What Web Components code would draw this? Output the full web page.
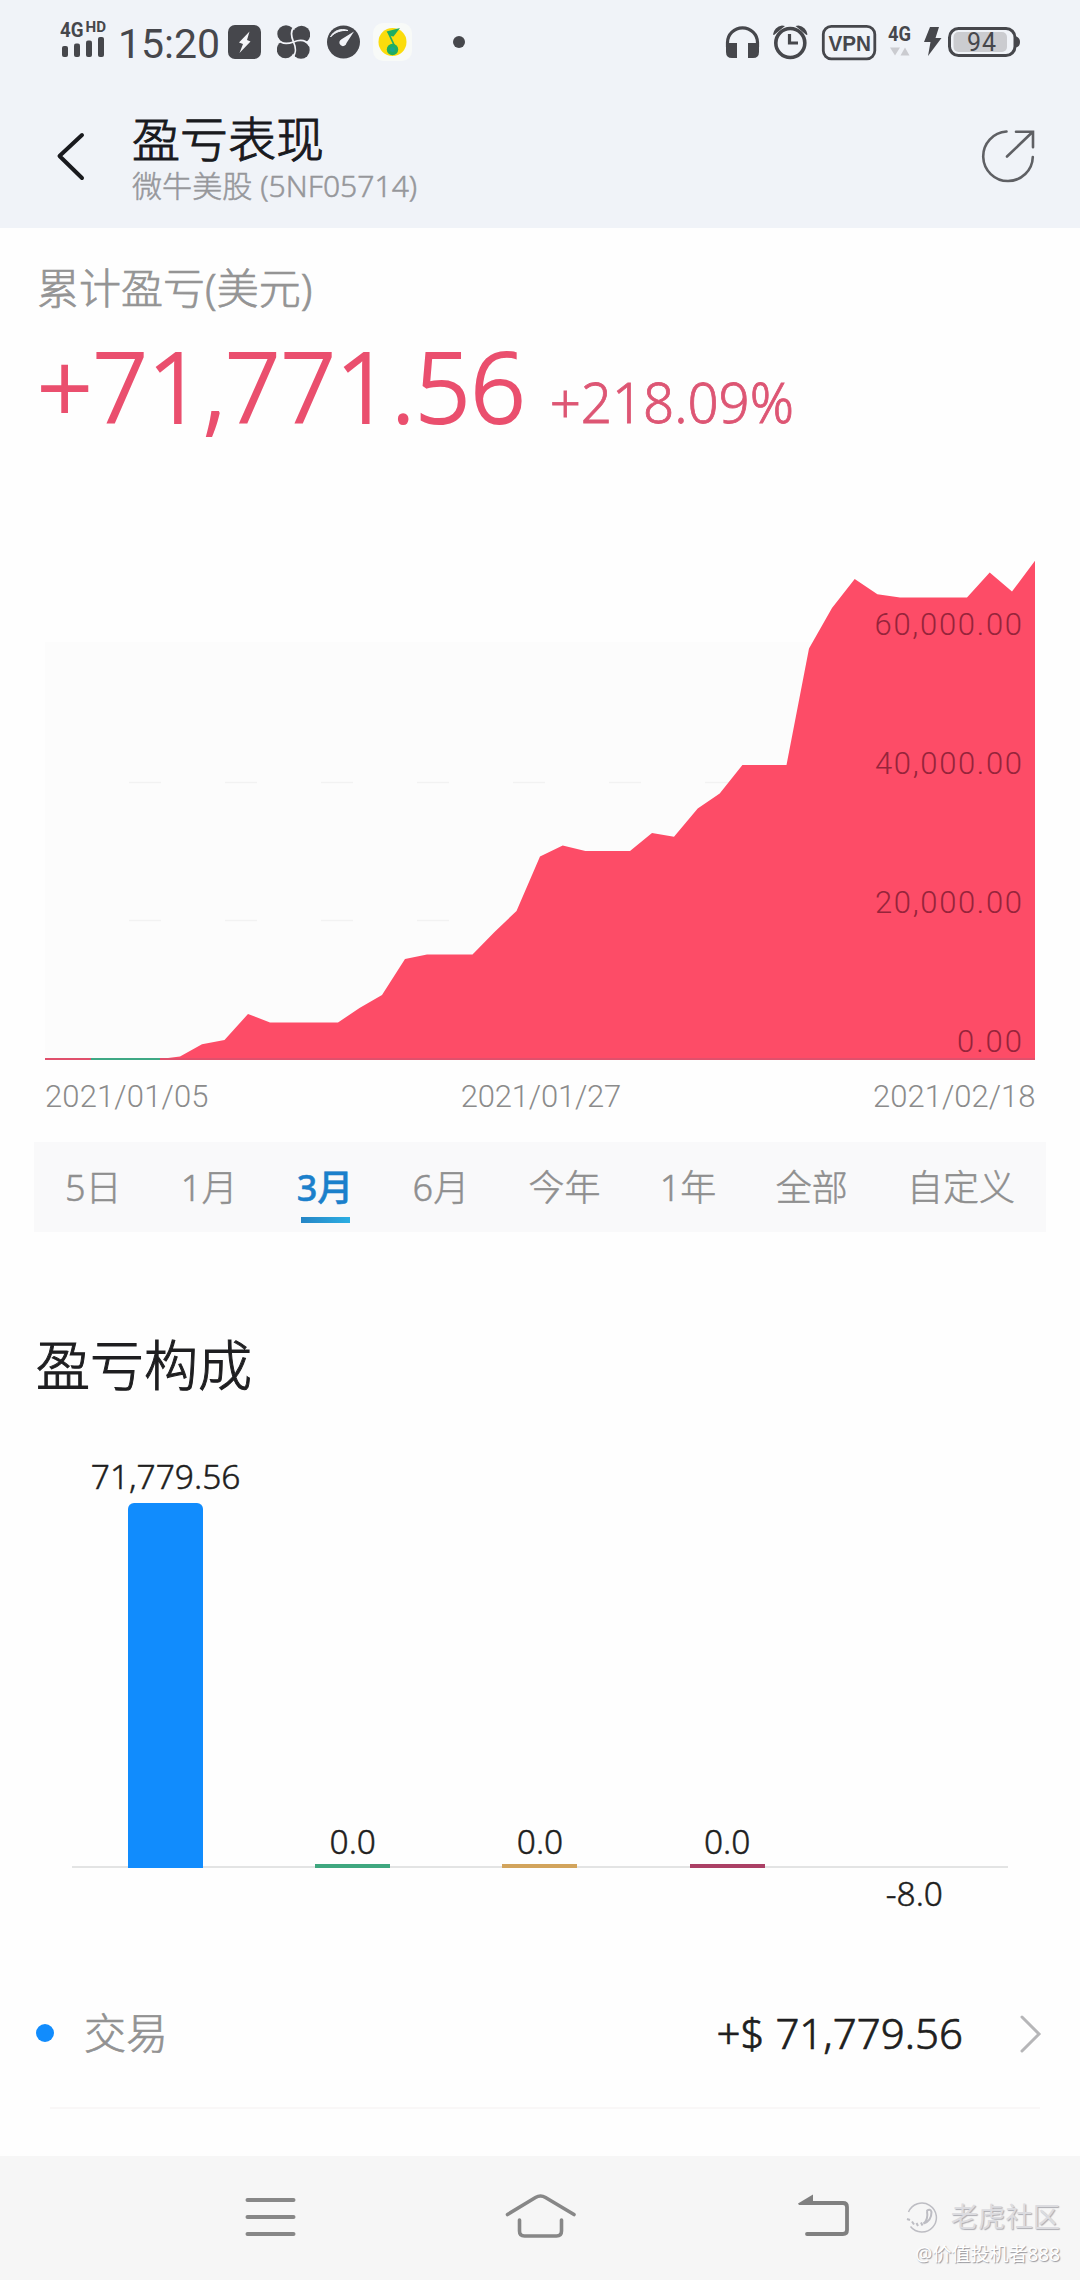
<!DOCTYPE html>
<html lang="zh-CN">
<head>
<meta charset="UTF-8">
<meta name="viewport" content="width=1080">
<title>盈亏表现</title>
<style>
  body {
    margin: 0;
    width: 1080px;
    height: 2280px;
    overflow: hidden;
    background: #fefefe;
    color: #1e1e20;
    font-family: "Noto Sans", "Noto Sans CJK SC", sans-serif;
    font-weight: 300;
  }
</style>
</head>
<body>
<pnl-app></pnl-app>

<script>
class StatusBar extends HTMLElement {
  constructor() {
    super();
    this.attachShadow({ mode: 'open' });
  }

  connectedCallback() {
    this.shadowRoot.innerHTML = `
      <style>
        :host {
          display: flex;
          align-items: center;
          box-sizing: border-box;
          height: 84px;
          padding: 0 60px;
          color: #46474c;
          font-family: Roboto, sans-serif;
          font-weight: 400;
        }
        svg {
          display: block;
          flex: none;
        }
        .time {
          width: 108px;
          padding-left: 10px;
          box-sizing: border-box;
          font-size: 41px;
          line-height: 84px;
          margin-top: 4px;
        }
        .left, .right {
          display: flex;
          align-items: center;
          height: 84px;
        }
        .right {
          margin-left: auto;
        }
      </style>
      <div class="left">
        <svg width="48" height="84" viewBox="60 0 48 84" fill="#46474c" font-weight="700">
          <text x="60" y="36.500" font-size="20" textLength="23.500" lengthAdjust="spacingAndGlyphs">4G</text>
          <text x="85.500" y="32" font-size="14" textLength="20.500" lengthAdjust="spacingAndGlyphs">HD</text>
          <rect x="62" y="46" width="6" height="11" rx="2"/>
          <rect x="74" y="43.500" width="6" height="13.500" rx="2"/>
          <rect x="86" y="40.500" width="6" height="16.500" rx="2"/>
          <rect x="98" y="37" width="6" height="20" rx="2"/>
        </svg>
        <span class="time">15:20</span>
        <svg style="margin-left:12px" width="33" height="34" viewBox="0 0 33 34">
          <rect width="33" height="34" rx="7" fill="#46474c"/>
          <path d="M21.500 6.500 11 17.500l4 1.500-3.500 9L22.500 16.500l-3.500-1.500Z" fill="#f4f5f8"/>
        </svg>
        <svg style="margin-left:16px" width="33" height="34" viewBox="0 0 33 34" fill="#46474c">
          <circle cx="9" cy="9" r="8.700"/><circle cx="24.500" cy="9.500" r="8.700"/>
          <circle cx="24" cy="25" r="8.700"/><circle cx="8.500" cy="24.500" r="8.700"/>
          <rect x="9" y="9" width="15" height="16"/>
          <path d="M19.500 0.500C14 3.500 13.500 10 16.500 17 19.500 23.500 19 30 14 33.500M0.500 13.500C4 19.500 11 19 16.500 17 23 14.500 29 15 32.500 20.500" fill="none" stroke="#f1f3f8" stroke-width="1.700"/>
        </svg>
        <svg style="margin-left:17px" width="33" height="34" viewBox="0 0 33 34">
          <circle cx="16.500" cy="17" r="16.500" fill="#46474c"/>
          <path d="M3.500 12C6.500 5.500 14 3 21 5.500 14 5 8 7 3.500 12Z" fill="#f1f3f8" stroke="#f1f3f8"/>
          <path d="M27 6.500 14.500 14.200a3.600 3.600 0 1 0 5 3.800Z" fill="#f1f3f8"/>
        </svg>
        <svg style="margin-left:13px" width="39" height="38" viewBox="0 0 39 38">
          <rect width="39" height="38" rx="10" fill="#f8faf8"/>
          <circle cx="19.500" cy="19" r="14" fill="#fbdc0c"/>
          <path d="m15 9 7.500 16" fill="none" stroke="#1fad62" stroke-width="1.700"/>
          <path d="m13.500 8.500 13.500-3.500-6.500 8.500-3-.5Z" fill="#1fad62"/>
          <circle cx="19.500" cy="26.500" r="5.700" fill="#1fad62"/>
          <circle cx="19.500" cy="26.500" r="2.500" fill="#19a88c"/>
        </svg>
        <svg style="margin-left:41px" width="12" height="12" viewBox="0 0 12 12"><circle cx="6" cy="6" r="6" fill="#46474c"/></svg>
      </div>
      <div class="right">
        <svg width="296" height="84" viewBox="724 0 296 84" fill="#46474c">
          <path d="M727.500 47V42.500a15 14.700 0 0 1 30 0V47" fill="none" stroke="#46474c" stroke-width="3.200"/>
          <path d="M726 43h11v15h-5q-6 0-6-6ZM759 43h-11v15h5q6 0 6-6Z"/>
          <circle cx="790.300" cy="43" r="14.500" fill="none" stroke="#46474c" stroke-width="3.600"/>
          <path d="M789.500 34v9h8.500" fill="none" stroke="#46474c" stroke-width="3.200"/>
          <path d="m773 34.500a10 10 0 0 1 9-9l3 .5-11 9ZM807.500 34.500a10 10 0 0 0-9-9l-3 .5 11 9Z"/>
          <rect x="823.300" y="26.300" width="51.500" height="32.500" rx="8" fill="none" stroke="#46474c" stroke-width="2.800"/>
          <text x="828.500" y="50.700" font-size="22.500" font-weight="700" font-family="Liberation Sans, sans-serif" textLength="42.500" lengthAdjust="spacingAndGlyphs">VPN</text>
          <text x="888" y="41" font-size="20" font-weight="700" textLength="23" lengthAdjust="spacingAndGlyphs">4G</text>
          <path d="M890 47.500h10l-5 8ZM900.500 55.500h9l-4.500-8Z" fill="#cacbd0"/>
          <path d="M930 27h9l-3.500 11h6L928 56l2.500-14H924Z"/>
          <rect x="949.500" y="28.500" width="65.500" height="27" rx="9" fill="none" stroke="#46474c" stroke-width="3"/>
          <rect x="953.500" y="32" width="53.500" height="20" rx="5" fill="#cbccd0"/>
          <path d="M1016 36.500q4 1 4 5.500t-4 5.500Z"/>
          <text x="967" y="50.700" font-size="25" textLength="29">94</text>
        </svg>
      </div>
    `;
  }
}

class PageHeader extends HTMLElement {
  constructor() {
    super();
    this.attachShadow({ mode: 'open' });
    this.shadowRoot.innerHTML = `
      <style>
        :host {
          display: flex;
          align-items: flex-start;
          height: 144px;
          padding: 0 44px 0 56px;
        }
        svg {
          display: block;
          flex: none;
          margin-top: 43px;
        }
        .titles {
          flex: 1;
          padding: 30px 0 0 44px;
        }
        .title {
          font-size: 48px;
          line-height: 50px;
          color: #191a1e;
          -webkit-text-stroke: 1px;
        }
        .sub {
          font-size: 30.1px;
          line-height: 44px;
          color: #96979b;
          -webkit-text-stroke: .5px;
        }
      </style>
      <svg width="32" height="58" viewBox="56 127 32 58" fill="none" stroke="#191a1e" stroke-width="4" stroke-linecap="round" stroke-linejoin="round">
        <path d="M82 135 59.500 156 82 178"/>
      </svg>
      <div class="titles">
        <div class="title"><slot name="title"></slot></div>
        <div class="sub"><slot name="sub"></slot></div>
      </div>
      <svg width="56" height="58" viewBox="980 127 56 58" fill="none" stroke="#5f6064" stroke-width="2.600" stroke-linecap="round">
        <path d="M1006.500 131.500A24.800 24.800 0 1 0 1032.800 157M1007 156.500 1032.500 132M1016 131.700h17v15.500"/>
      </svg>
    `;
  }
}

class ProfitSummary extends HTMLElement {
  constructor() {
    super();
    this.attachShadow({ mode: 'open' });
    this.shadowRoot.innerHTML = `
      <style>
        :host {
          display: block;
          box-sizing: border-box;
          height: 322px;
          padding: 30px 36px 0 37px;
        }
        .label {
          font-size: 42px;
          line-height: 60px;
          color: #949494;
          -webkit-text-stroke: .7px;
        }
        .values {
          display: flex;
          align-items: baseline;
          gap: 24px;
          margin-top: 2px;
          color: #ea4f6e;
          line-height: 130px;
        }
        .amount {
          font-size: 97px;
          -webkit-text-stroke: 2px;
        }
        .rate {
          font-size: 54.5px;
          color: #dd5674;
          -webkit-text-stroke: .8px;
        }
      </style>
      <div class="label"><slot name="label"></slot></div>
      <div class="values">
        <span class="amount"><slot name="amount"></slot></span>
        <span class="rate"><slot name="rate"></slot></span>
      </div>
    `;
  }
}

class AreaChart extends HTMLElement {
  constructor() {
    super();
    this.attachShadow({ mode: 'open' });

    this.points = [
      [45.5, 1058.5], [160, 1059], [180, 1056.5], [202, 1044.3], [224.5, 1040], [248, 1014],
      [270, 1022.5], [338, 1022.5], [359.5, 1008], [382, 995], [405, 959], [427, 954.5],
      [472.5, 954.5], [494.5, 932], [516.5, 911], [540, 856.5], [562.7, 845.4], [585.4, 851],
      [630, 851], [652, 833], [674, 836.7], [697.7, 808.6], [719.7, 793.6], [742.4, 765],
      [786.5, 765], [809, 648.5], [832, 608], [854.7, 579], [877.4, 594.3], [900, 597.5],
      [967, 597.5], [989.7, 572.6], [1012, 591.6], [1035, 560.7]
    ];
    this.ticks = [['60,000.00', 634.5, 147.5], ['40,000.00', 773.5, 147], ['20,000.00', 912.5, 147], ['0.00', 1051.5, 65]];
  }

  connectedCallback() {
    const line = this.points.map(p => p.join(',')).join(' ');
    this.shadowRoot.innerHTML = `
      <style>
        :host {
          display: block;
          height: 592px;
        }
        svg {
          display: block;
        }
        text {
          font-family: Roboto, sans-serif;
          font-weight: 300;
          font-size: 31px;
        }
        .tick {
          fill: #96243b;
          text-anchor: end;
        }
        .date {
          fill: #8b8b8b;
        }
      </style>
      <svg width="1080" height="592" viewBox="0 550 1080 592">
        <rect x="45" y="642" width="990" height="417" fill="#fcfcfc"/>
        <path d="M129 782.500H740M129 920.500H490" stroke="#f2f2f2" stroke-width="1.500" stroke-dasharray="32 64"/>
        <polygon points="45.500,1060 ${line} 1035,1060" fill="#fd4c67"/>
        <path d="M45 1059H1035" stroke="#e0506c" stroke-width="2"/>
        <path d="M91 1059h69" stroke="#3fa884" stroke-width="2"/>
        ${this.ticks.map(([label, y, w]) => `
          <text class="tick" x="1022" y="${y}" textLength="${w}">${label}</text>
        `).join('')}
        <text class="date" x="45" y="1107" textLength="163.500">2021/01/05</text>
        <text class="date" x="541" y="1107" text-anchor="middle" textLength="160.500">2021/01/27</text>
        <text class="date" x="1035.500" y="1107" text-anchor="end" textLength="162.500">2021/02/18</text>
      </svg>
    `;
  }
}

class RangeTabs extends HTMLElement {
  constructor() {
    super();
    this.attachShadow({ mode: 'open' });
    this.tabs = ['5日', '1月', '3月', '6月', '今年', '1年', '全部', '自定义'];
    this.active = 2;
  }

  connectedCallback() {
    this.render();
  }

  render = () => {
    this.shadowRoot.innerHTML = `
      <style>
        :host {
          display: flex;
          gap: 59.3px;
          height: 90px;
          margin: 0 34px;
          padding-left: 31px;
          background: #f9f9fa;
          font-size: 36px;
          line-height: 91px;
          color: #8f8f8f;
          -webkit-text-stroke: .5px;
        }
        .tab {
          display: flex;
          flex-direction: column;
          align-items: center;
          height: 90px;
          white-space: nowrap;
          cursor: pointer;
        }
        .tab.active {
          color: #1b80cb;
          font-weight: 500;
          width: 56.6px;
        }
        .tab.active::after {
          content: "";
          flex: none;
          width: 49px;
          height: 6px;
          margin-top: -16px;
          background: linear-gradient(90deg, #2585c5, #2caee2);
        }
      </style>
      ${this.tabs.map((t, i) => `<div class="tab${i === this.active ? ' active' : ''}" data-index="${i}">${t}</div>`).join('')}
    `;

    this.shadowRoot.querySelectorAll('.tab').forEach(tab => {
      tab.addEventListener('click', () => {
        this.active = Number(tab.dataset.index);
        this.render();
      });
    });
  }
}

class BarChart extends HTMLElement {
  constructor() {
    super();
    this.attachShadow({ mode: 'open' });
    this.data = [
      { value: '71,779.56', height: 365, color: '#118cfd' },
      { value: '0.0', height: 4, color: '#3fa77f' },
      { value: '0.0', height: 4, color: '#d2a45c' },
      { value: '0.0', height: 4, color: '#ab4065' },
      { value: '-8.0', height: 0, color: 'transparent' }
    ];
  }

  connectedCallback() {
    this.shadowRoot.innerHTML = `
      <style>
        :host {
          display: grid;
          grid-template-columns: repeat(5, 187.2px);
          height: 512px;
          margin: 0 72px;
          font-size: 33.5px;
          line-height: 44px;
          -webkit-text-stroke: .5px;
        }
        .col {
          display: flex;
          flex-direction: column;
          justify-content: flex-end;
          align-items: center;
          box-sizing: border-box;
          height: 418px;
          border-bottom: 2px solid #e3e4e4;
        }
        .bar {
          width: 75px;
          margin-top: 1px;
          margin-bottom: -2px;
        }
        .bar.tall {
          border-radius: 6px 6px 0 0;
          margin-top: 5px;
        }
        .below {
          margin-bottom: -49px;
        }
      </style>
      ${this.data.map(d => `
        <div class="col">
          <span class="${d.height ? 'label' : 'below'}">${d.value}</span>
          ${d.height ? `<div class="bar ${d.height > 10 ? 'tall' : ''}" style="height:${d.height}px;background:${d.color}"></div>` : ''}
        </div>
      `).join('')}
    `;
  }
}

class DetailRow extends HTMLElement {
  constructor() {
    super();
    this.attachShadow({ mode: 'open' });
    this.shadowRoot.innerHTML = `
      <style>
        :host {
          display: flex;
          align-items: center;
          height: 142px;
          margin: 0 36px;
          font-size: 42px;
          line-height: 142px;
          -webkit-text-stroke: .7px;
        }
        .dot {
          width: 18px;
          height: 18px;
          border-radius: 50%;
          background: #118cfd;
          margin-right: 30px;
        }
        .name {
          flex: 1;
          color: #929292;
        }
        svg {
          margin-left: 55px;
          margin-right: 2px;
        }
      </style>
      <span class="dot"></span>
      <span class="name"><slot name="name"></slot></span>
      <span class="value"><slot name="value"></slot></span>
      <svg width="24" height="40" viewBox="0 0 24 40" fill="none" stroke="#b6b6b8" stroke-width="3" stroke-linecap="round">
        <path d="m4 4 17 17L4 38"/>
      </svg>
    `;
  }
}

class NavBar extends HTMLElement {
  constructor() {
    super();
    this.attachShadow({ mode: 'open' });
    this.shadowRoot.innerHTML = `
      <style>
        :host {
          display: flex;
          justify-content: center;
          align-items: center;
          gap: 196px;
          height: 124px;
          background: #f6f6f6;
        }
        svg {
          display: block;
        }
      </style>
      <svg width="74" height="54" viewBox="233.500 2191 74 54" fill="none" stroke="#878787" stroke-width="4" stroke-linecap="round">
        <path d="M248 2200h46M248 2217h46M248 2234h46"/>
      </svg>
      <svg width="74" height="54" viewBox="503.500 2191 74 54" fill="none" stroke="#878787" stroke-width="3.600" stroke-linecap="round">
        <path d="M508 2214.500 536 2197.500q5-3 10 0L574.500 2214.500M520 2220v11q0 5 5 5h32q5 0 5-5v-11"/>
      </svg>
      <svg width="74" height="54" viewBox="773 2191 74 54" overflow="visible">
        <path d="M808 2203h35q4 0 4 4v23q0 4-4 4h-36" fill="none" stroke="#808080" stroke-width="3.800" stroke-linecap="round"/>
        <path d="m798 2203.500 15-9v10.500h-14Z" fill="#808080"/>
      </svg>
    `;
  }
}

class WaterMark extends HTMLElement {
  constructor() {
    super();
    this.attachShadow({ mode: 'open' });
    this.shadowRoot.innerHTML = `
      <style>
        /* lies over the navigation bar */
        :host {
          position: absolute;
          right: 20px;
          top: 2197px;
          display: flex;
          flex-direction: column;
          align-items: flex-end;
          color: #fff;
          white-space: nowrap;
        }
        .brand {
          display: flex;
          align-items: center;
          gap: 13px;
          font-size: 27.3px;
          font-weight: 400;
          line-height: 40px;
          color: #dcdce0;
          text-shadow: 1px 1px 1px #adadb3;
        }
        .user {
          font-size: 19px;
          font-weight: 400;
          line-height: 34px;
          text-shadow: 1px 1px 1px #96969c;
        }
      </style>
      <div class="brand">
        <svg width="32" height="32" viewBox="0 0 32 32" fill="none" stroke="#bdbdc3" stroke-width="1.500">
          <path d="M2.500 11A14.500 14.500 0 1 1 4.500 25.500"/>
          <path d="M20.500 10q4-3 5 1 0 9-8 11.500 5-4 3.500-12.500M1 18l3 1M6 20.500l2 3M10.500 22l1.500 3M15 21.500l1.500 3" stroke-width="2"/>
        </svg>
        <slot name="brand"></slot>
      </div>
      <div class="user"><slot name="user"></slot></div>
    `;
  }
}

class PnlApp extends HTMLElement {
  constructor() {
    super();
    this.attachShadow({ mode: 'open' });
    this.shadowRoot.innerHTML = `
      <style>
        :host {
          display: flex;
          flex-direction: column;
          width: 1080px;
          height: 2280px;
        }
        .top {
          background: #f0f3f8;
        }
        h2 {
          margin: 93px 36px 0;
          font-size: 54px;
          font-weight: 300;
          line-height: 80px;
          -webkit-text-stroke: 1px;
        }
        bar-chart {
          margin-top: 45px;
        }
        hr {
          margin: 3px 40px 0 50px;
          border: 0;
          height: 2px;
          background: #f9f7f7;
        }
        nav-bar {
          margin-top: auto;
        }
      </style>
      <div class="top">
        <status-bar></status-bar>
        <page-header>
          <span slot="title">盈亏表现</span>
          <span slot="sub">微牛美股 (5NF05714)</span>
        </page-header>
      </div>
      <profit-summary>
        <span slot="label">累计盈亏(美元)</span>
        <span slot="amount">+71,771.56</span>
        <span slot="rate">+218.09%</span>
      </profit-summary>
      <area-chart></area-chart>
      <range-tabs></range-tabs>
      <h2>盈亏构成</h2>
      <bar-chart></bar-chart>
      <detail-row>
        <span slot="name">交易</span>
        <span slot="value">+$ 71,779.56</span>
      </detail-row>
      <hr>
      <nav-bar></nav-bar>
      <water-mark>
        <span slot="brand">老虎社区</span>
        <span slot="user">@价值投机者888</span>
      </water-mark>
    `;
  }
}

customElements.define('status-bar', StatusBar);
customElements.define('page-header', PageHeader);
customElements.define('profit-summary', ProfitSummary);
customElements.define('area-chart', AreaChart);
customElements.define('range-tabs', RangeTabs);
customElements.define('bar-chart', BarChart);
customElements.define('detail-row', DetailRow);
customElements.define('nav-bar', NavBar);
customElements.define('water-mark', WaterMark);
customElements.define('pnl-app', PnlApp);
</script>
</body>
</html>
